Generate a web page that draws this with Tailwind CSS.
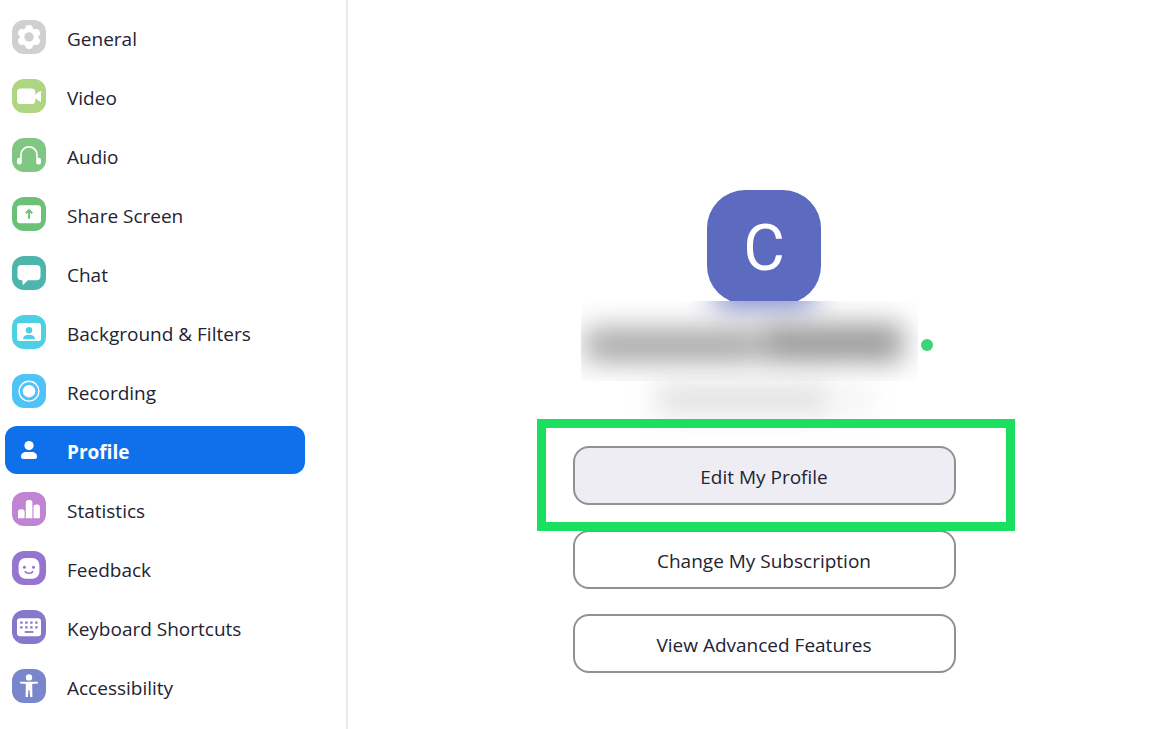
<!DOCTYPE html>
<html lang="en">
<head>
    <meta charset="UTF-8" />
    <meta name="viewport" content="width=device-width, initial-scale=1.0" />
    <title>Settings - Profile</title>
    <script src="https://cdn.jsdelivr.net/npm/@tailwindcss/browser@4"></script>
</head>
<body class="bg-white min-h-screen flex font-['Open_Sans','Noto_Sans',sans-serif] text-[19px] leading-6 text-[#232333]">

<nav aria-label="Settings" class="w-[348px] shrink-0 border-r-2 border-[#e9ebf0] pt-[13px] pl-[5px] pr-[41px]">
    <ul class="flex flex-col gap-[11px]">
        <li>
            <a href="#general" class="flex h-12 items-center gap-[21px] rounded-xl px-[7px]">
                <svg class="size-[34px] shrink-0" viewBox="0 0 34 34" aria-hidden="true">
                    <rect width="34" height="34" rx="12" fill="#d0d0d0"/>
                    <g fill="#fff">
                        <circle cx="17" cy="17" r="9.4"/>
                        <rect x="13.3" y="5" width="7.4" height="24" rx="3.4"/>
                        <rect x="13.3" y="5" width="7.4" height="24" rx="3.4" transform="rotate(60 17 17)"/>
                        <rect x="13.3" y="5" width="7.4" height="24" rx="3.4" transform="rotate(120 17 17)"/>
                    </g>
                    <circle cx="17" cy="17" r="4.7" fill="#d0d0d0"/>
                </svg>
                <span class="pt-1">General</span>
            </a>
        </li>
        <li>
            <a href="#video" class="flex h-12 items-center gap-[21px] rounded-xl px-[7px]">
                <svg class="size-[34px] shrink-0" viewBox="0 0 34 34" aria-hidden="true">
                    <rect width="34" height="34" rx="12" fill="#aed581"/>
                    <rect x="5" y="9.5" width="18.3" height="15.5" rx="3.6" fill="#fff"/>
                    <path d="M23 15.8l5-3.7c.6-.4 1-.1 1 .5v9.6c0 .6-.4.9-1 .5l-5-3.6z" fill="#fff"/>
                </svg>
                <span class="pt-1">Video</span>
            </a>
        </li>
        <li>
            <a href="#audio" class="flex h-12 items-center gap-[21px] rounded-xl px-[7px]">
                <svg class="size-[34px] shrink-0" viewBox="0 0 34 34" aria-hidden="true">
                    <rect width="34" height="34" rx="12" fill="#81c784"/>
                    <path d="M9 21v-4.500a8 7.600 0 0 1 16 0V21" fill="none" stroke="#fff" stroke-width="1.600"/>
                    <rect x="5" y="19.800" width="4.800" height="6.600" rx="2.200" fill="#fff"/>
                    <rect x="24.200" y="19.800" width="4.800" height="6.600" rx="2.200" fill="#fff"/>
                </svg>
                <span class="pt-1">Audio</span>
            </a>
        </li>
        <li>
            <a href="#share-screen" class="flex h-12 items-center gap-[21px] rounded-xl px-[7px]">
                <svg class="size-[34px] shrink-0" viewBox="0 0 34 34" aria-hidden="true">
                    <rect width="34" height="34" rx="12" fill="#6cc078"/>
                    <rect x="5" y="8.3" width="24" height="18" rx="3" fill="#fff"/>
                    <path d="M17 21.8v-8.300M13.700 16.300l3.300-3.200 3.300 3.200" fill="none" stroke="#6cc078" stroke-width="1.900"/>
                </svg>
                <span class="pt-1">Share Screen</span>
            </a>
        </li>
        <li>
            <a href="#chat" class="flex h-12 items-center gap-[21px] rounded-xl px-[7px]">
                <svg class="size-[34px] shrink-0" viewBox="0 0 34 34" aria-hidden="true">
                    <rect width="34" height="34" rx="12" fill="#4db6ac"/>
                    <path d="M9.500 9h15a4 4 0 0 1 4 4v7.300a4 4 0 0 1-4 4h-8.700l-4.300 4.300c-.5.400-1 .2-1-.4v-4h-1a4 4 0 0 1-4-4V13a4 4 0 0 1 4-4z" fill="#fff"/>
                </svg>
                <span class="pt-1">Chat</span>
            </a>
        </li>
        <li>
            <a href="#background" class="flex h-12 items-center gap-[21px] rounded-xl px-[7px]">
                <svg class="size-[34px] shrink-0" viewBox="0 0 34 34" aria-hidden="true">
                    <rect width="34" height="34" rx="12" fill="#4dd0e1"/>
                    <rect x="5" y="8" width="24" height="18" rx="2.5" fill="#fff"/>
                    <circle cx="17" cy="15.3" r="3.2" fill="#4dd0e1"/>
                    <path d="M11 24.300c0-2.800 2.200-4.300 4.500-4.300h3c2.300 0 4.500 1.500 4.500 4.300z" fill="#4dd0e1"/>
                </svg>
                <span class="pt-1">Background &amp; Filters</span>
            </a>
        </li>
        <li>
            <a href="#recording" class="flex h-12 items-center gap-[21px] rounded-xl px-[7px]">
                <svg class="size-[34px] shrink-0" viewBox="0 0 34 34" aria-hidden="true">
                    <rect width="34" height="34" rx="12" fill="#4fc3f7"/>
                    <circle cx="17" cy="17.2" r="9.9" fill="none" stroke="#fff" stroke-width="1.4"/>
                    <circle cx="17" cy="17.2" r="6.2" fill="#fff"/>
                </svg>
                <span class="pt-1">Recording</span>
            </a>
        </li>
        <li>
            <a href="#profile" aria-current="page" class="flex h-12 items-center gap-[21px] rounded-xl bg-[#0e71eb] px-[7px] font-bold text-white">
                <svg class="size-[34px] shrink-0" viewBox="0 0 34 34" aria-hidden="true">
                    <circle cx="17" cy="12.6" r="4.6" fill="#fff"/>
                    <path d="M9 23.500c0-2.800 2.300-4.500 5-4.500h6c2.700 0 5 1.700 5 4.500 0 1.700-.8 2.500-2.500 2.500h-11c-1.700 0-2.500-.8-2.500-2.500z" fill="#fff"/>
                </svg>
                <span class="pt-1">Profile</span>
            </a>
        </li>
        <li>
            <a href="#statistics" class="flex h-12 items-center gap-[21px] rounded-xl px-[7px]">
                <svg class="size-[34px] shrink-0" viewBox="0 0 34 34" aria-hidden="true">
                    <rect width="34" height="34" rx="12" fill="#c084d2"/>
                    <path d="M6 26.300v-6.500a2.500 2.500 0 0 1 2.500-2.500h1.600a2.500 2.500 0 0 1 2.500 2.500v6.500zM13.800 26.300V10.700A2.700 2.700 0 0 1 16.500 8h1.200a2.700 2.700 0 0 1 2.700 2.700v15.600zM21.500 26.300V15a2.600 2.600 0 0 1 2.600-2.600h1.200A2.600 2.600 0 0 1 27.900 15v11.300z" fill="#fff"/>
                </svg>
                <span class="pt-1">Statistics</span>
            </a>
        </li>
        <li>
            <a href="#feedback" class="flex h-12 items-center gap-[21px] rounded-xl px-[7px]">
                <svg class="size-[34px] shrink-0" viewBox="0 0 34 34" aria-hidden="true">
                    <rect width="34" height="34" rx="12" fill="#9575cd"/>
                    <rect x="6.6" y="7" width="20.8" height="20.8" rx="7" fill="#fff"/>
                    <circle cx="12.4" cy="16.2" r="1.5" fill="#9575cd"/>
                    <circle cx="21.5" cy="16.2" r="1.5" fill="#9575cd"/>
                    <path d="M12.800 20.300c2 2.600 6.400 2.600 8.400 0" fill="none" stroke="#9575cd" stroke-width="1.6"/>
                </svg>
                <span class="pt-1">Feedback</span>
            </a>
        </li>
        <li>
            <a href="#shortcuts" class="flex h-12 items-center gap-[21px] rounded-xl px-[7px]">
                <svg class="size-[34px] shrink-0" viewBox="0 0 34 34" aria-hidden="true">
                    <rect width="34" height="34" rx="12" fill="#8679cc"/>
                    <rect x="5" y="8.3" width="24" height="18" rx="3" fill="#fff"/>
                    <path d="M8.200 12.700h2.400m2.600 0h2.400m2.600 0h2.400m2.600 0h2.400M8.200 17.300h2.400m2.600 0h2.400m2.600 0h2.400m2.600 0h2.400" stroke="#8679cc" stroke-width="2.3"/>
                    <path d="M12.800 22h8.600" stroke="#8679cc" stroke-width="1.8"/>
                </svg>
                <span class="pt-1">Keyboard Shortcuts</span>
            </a>
        </li>
        <li>
            <a href="#accessibility" class="flex h-12 items-center gap-[21px] rounded-xl px-[7px]">
                <svg class="size-[34px] shrink-0" viewBox="0 0 34 34" aria-hidden="true">
                    <rect width="34" height="34" rx="12" fill="#7986cb"/>
                    <circle cx="17" cy="8.4" r="3.2" fill="#fff"/>
                    <path d="M8.700 12.700h16.600c1 0 1 1.600.1 1.700l-5.200.6.200 12.900h-2.300l-.5-6.600h-1.200l-.5 6.600h-2.300l.2-12.900-5.200-.6c-.9-.1-.9-1.700.1-1.700z" fill="#fff"/>
                </svg>
                <span class="pt-1">Accessibility</span>
            </a>
        </li>
    </ul>
</nav>

<main class="flex flex-1 flex-col items-center pt-[190px] pl-[6px]">
    <div class="flex h-[111px] w-full justify-center overflow-hidden">
        <div class="flex size-[114px] shrink-0 items-center justify-center rounded-[38px] bg-[#5c6bc0] pt-1 font-['Roboto',sans-serif] text-[64px] leading-none text-white">C</div>
    </div>

    <!-- Name and status; the name is hidden behind a blur -->
    <div class="grid w-[383px] grid-cols-[337px_12px] gap-[3px] pl-2">
        <div class="relative h-20 overflow-hidden">
            <div class="absolute -top-6 left-[130px] h-8 w-[106px] rounded-full bg-[#5c6bc0]/80 blur-[14px]"></div>
            <div class="absolute top-[27px] left-1 flex gap-1 blur-[14px]">
                <div class="h-[34px] w-[172px] bg-[#a6a6a6]"></div>
                <div class="h-[38px] w-[142px] -translate-y-1 bg-[#989898]"></div>
            </div>
        </div>
        <span class="mt-[38px] size-3 rounded-full bg-[#3ed477]" role="img" aria-label="Available"></span>
    </div>
    <div class="flex h-[65px] w-[383px] justify-center">
        <div class="mt-1 h-[28px] w-[176px] bg-[#dedede] blur-[14px]"></div>
        <div class="mt-1 h-[28px] w-[40px] bg-[#f3f3f3] blur-[14px]"></div>
    </div>

    <div class="flex w-[383px] flex-col gap-[25px]">
        <div class="relative flex">
            <button type="button" class="h-[59px] w-full rounded-2xl border-2 border-[#909096] bg-[#eeedf3] pt-0.5">Edit My Profile</button>
            <div class="pointer-events-none absolute -top-[27px] -right-[59px] -bottom-[26px] -left-[36px] z-10 border-9 border-[#1be05f]"></div>
        </div>
        <button type="button" class="h-[59px] w-full rounded-2xl border-2 border-[#909096] bg-white pt-0.5">Change My Subscription</button>
        <button type="button" class="h-[59px] w-full rounded-2xl border-2 border-[#909096] bg-white pt-0.5">View Advanced Features</button>
    </div>
</main>

</body>
</html>
